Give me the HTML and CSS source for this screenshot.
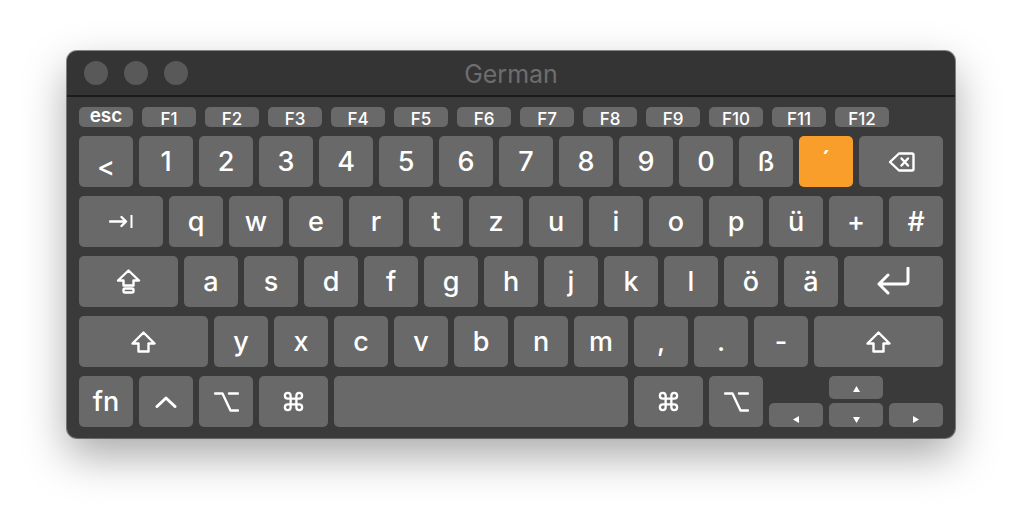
FILE: index.html
```html
<!DOCTYPE html>
<html lang="de">
<head>
<meta charset="utf-8">
<title>German</title>
<link rel="stylesheet" href="styles.css">
</head>
<body>
<div class="stage">
  <div class="window">
    <div class="titlebar">
      <div class="lights"><span class="light"></span><span class="light"></span><span class="light"></span></div>
      <div class="title">German</div>
      <div></div>
    </div>
    <div class="board">
      <div class="frow">
        <div class="fkey esc">esc</div>
        <div class="fkey">F1</div><div class="fkey">F2</div><div class="fkey">F3</div><div class="fkey">F4</div>
        <div class="fkey">F5</div><div class="fkey">F6</div><div class="fkey">F7</div><div class="fkey">F8</div>
        <div class="fkey">F9</div><div class="fkey">F10</div><div class="fkey">F11</div><div class="fkey">F12</div>
      </div>
      <div class="row">
        <div class="key lower">&lt;</div>
        <div class="key">1</div><div class="key">2</div><div class="key">3</div><div class="key">4</div><div class="key">5</div>
        <div class="key">6</div><div class="key">7</div><div class="key">8</div><div class="key">9</div><div class="key">0</div>
        <div class="key">ß</div>
        <div class="key orange">´</div>
        <div class="key k84">
          <svg class="ico" width="27" height="20" viewBox="0 0 27 20"><path d="M11 1.5H24Q25.5 1.5 25.5 3V17Q25.5 18.5 24 18.5H11L2 10Z"/><path d="M13.5 6.5L20 13.5M20 6.5L13.5 13.5"/></svg>
        </div>
      </div>
      <div class="row">
        <div class="key k84">
          <svg class="ico" width="25" height="13" viewBox="0 0 25 13"><path d="M1 6.5H17M12.5 2L17 6.5L12.5 11"/><path class="thin" d="M22.5 0.5V12.5"/></svg>
        </div>
        <div class="key">q</div><div class="key">w</div><div class="key">e</div><div class="key">r</div><div class="key">t</div>
        <div class="key">z</div><div class="key">u</div><div class="key">i</div><div class="key">o</div><div class="key">p</div>
        <div class="key">ü</div><div class="key">+</div><div class="key">#</div>
      </div>
      <div class="row">
        <div class="key k99">
          <svg class="ico" width="25" height="25" viewBox="0 0 25 25"><path d="M12.5 1.5L23 11.5H17.5V16.5H7.5V11.5H2Z"/><rect x="7.5" y="19.5" width="10" height="4" rx="1.5"/></svg>
        </div>
        <div class="key">a</div><div class="key">s</div><div class="key">d</div><div class="key">f</div><div class="key">g</div>
        <div class="key">h</div><div class="key">j</div><div class="key">k</div><div class="key">l</div><div class="key">ö</div><div class="key">ä</div>
        <div class="key k99">
          <svg class="ico bold" width="35" height="29" viewBox="0 0 35 29"><path d="M32 1V14.5Q32 17 29.5 17H3M12 8L3 17L12 26"/></svg>
        </div>
      </div>
      <div class="row">
        <div class="key k129">
          <svg class="ico" width="25" height="22" viewBox="0 0 25 22"><path d="M12.5 1.5L23.5 12.5H17.5V20.5H7.5V12.5H1.5Z"/></svg>
        </div>
        <div class="key">y</div><div class="key">x</div><div class="key">c</div><div class="key">v</div><div class="key">b</div>
        <div class="key">n</div><div class="key">m</div><div class="key">,</div><div class="key">.</div><div class="key">-</div>
        <div class="key k129">
          <svg class="ico" width="25" height="22" viewBox="0 0 25 22"><path d="M12.5 1.5L23.5 12.5H17.5V20.5H7.5V12.5H1.5Z"/></svg>
        </div>
      </div>
      <div class="row">
        <div class="key">fn</div>
        <div class="key">
          <svg class="ico bold" width="22" height="12" viewBox="0 0 22 12"><path d="M2 10.5L11 2L20 10.5"/></svg>
        </div>
        <div class="key">
          <svg class="ico" width="25" height="22" viewBox="0 0 25 22"><path d="M1 2.5H8.5L16.5 19.5H24M15 2.5H24"/></svg>
        </div>
        <div class="key k69">
          <svg class="ico" width="25" height="23" viewBox="0 0 24 24"><path d="M15 6v12a3 3 0 1 0 3-3H6a3 3 0 1 0 3 3V6a3 3 0 1 0-3 3h12a3 3 0 1 0-3-3"/></svg>
        </div>
        <div class="key space"></div>
        <div class="key k69">
          <svg class="ico" width="25" height="23" viewBox="0 0 24 24"><path d="M15 6v12a3 3 0 1 0 3-3H6a3 3 0 1 0 3 3V6a3 3 0 1 0-3 3h12a3 3 0 1 0-3-3"/></svg>
        </div>
        <div class="key">
          <svg class="ico" width="25" height="22" viewBox="0 0 25 22"><path d="M1 2.5H8.5L16.5 19.5H24M15 2.5H24"/></svg>
        </div>
        <div class="arrows">
          <div class="arrow-top">
            <div class="akey up"><svg class="tri" width="7" height="6" viewBox="0 0 7 6"><path d="M3.5 0L7 6H0Z"/></svg></div>
          </div>
          <div class="arrow-bottom">
            <div class="akey"><svg class="tri" width="6" height="7" viewBox="0 0 6 7"><path d="M0 3.5L6 0V7Z"/></svg></div>
            <div class="akey"><svg class="tri" width="7" height="6" viewBox="0 0 7 6"><path d="M0 0H7L3.5 6Z"/></svg></div>
            <div class="akey"><svg class="tri" width="6" height="7" viewBox="0 0 6 7"><path d="M6 3.5L0 0V7Z"/></svg></div>
          </div>
        </div>
      </div>
    </div>
  </div>
</div>
</body>
</html>
```
FILE: styles.css
```css
html, body {
  margin: 0;
  background: #ffffff;
}

body {
  font-family: Inter, "Liberation Sans", sans-serif;
  overflow: hidden;
}

.stage {
  min-height: 522px;
  box-sizing: border-box;
  padding: 51px 0 0 67px;
}

.window {
  width: 888px;
  height: 387px;
  box-sizing: border-box;
  background: #3b3a3a;
  border-radius: 10px;
  overflow: hidden;
  box-shadow: 0 0 0 1px rgba(0, 0, 0, 0.45), inset 0 1px 0 rgba(255, 255, 255, 0.22), 0 18px 44px rgba(0, 0, 0, 0.34);
}

.titlebar {
  height: 44px;
  background: #353434;
  border-bottom: 2px solid #1c1b1b;
  display: grid;
  grid-template-columns: 1fr auto 1fr;
  align-items: center;
}

.lights {
  display: flex;
  gap: 16px;
  padding-left: 17px;
}

.light {
  width: 24px;
  height: 24px;
  border-radius: 50%;
  background: #5a5959;
}

.title {
  color: #6e6d6d;
  font-size: 25px;
  line-height: 1;
  padding-top: 2px;
}

.board {
  padding: 10px 11px 10px 12px;
  display: flex;
  flex-direction: column;
  gap: 9px;
}

.frow {
  display: flex;
  gap: 9px;
}

.fkey {
  width: 54px;
  height: 20px;
  border-radius: 5px;
  background: #6a6969;
  color: #fff;
  font-size: 17px;
  font-weight: 500;
  line-height: 20px;
  text-align: center;
  padding-top: 2px;
  box-sizing: border-box;
}

.fkey.esc {
  font-size: 19px;
  font-weight: 600;
  padding-top: 0;
  line-height: 18px;
}

.row {
  display: flex;
  gap: 6px;
}

.key {
  width: 54px;
  height: 51px;
  flex: none;
  border-radius: 5px;
  background: #6a6969;
  color: #ffffff;
  display: flex;
  align-items: center;
  justify-content: center;
  font-size: 27px;
  font-weight: 500;
  line-height: 1;
}

.key.lower {
  padding-top: 9px;
  box-sizing: border-box;
}

.key.orange {
  background: #f99e2a;
}

.k84 { width: 84px; }
.k99 { width: 99px; }
.k129 { width: 129px; }
.k69 { width: 69px; }
.space { width: 294px; }

.ico {
  fill: none;
  stroke: #ffffff;
  stroke-width: 2.4;
  stroke-linejoin: round;
  stroke-linecap: round;
}

.ico.bold {
  stroke-width: 3;
}

.ico .thin {
  stroke-width: 2;
}

.arrows {
  width: 174px;
  height: 51px;
  display: flex;
  flex-direction: column;
  gap: 4px;
}

.arrow-top {
  display: flex;
  justify-content: center;
}

.arrow-bottom {
  display: flex;
  gap: 6px;
}

.akey {
  width: 54px;
  height: 24px;
  border-radius: 5px;
  background: #6a6969;
  display: flex;
  align-items: flex-end;
  justify-content: center;
  padding-bottom: 4px;
  box-sizing: border-box;
}

.akey.up {
  height: 23px;
  align-items: center;
  padding-bottom: 0;
  padding-top: 3px;
}

.tri {
  fill: #ffffff;
}
```
